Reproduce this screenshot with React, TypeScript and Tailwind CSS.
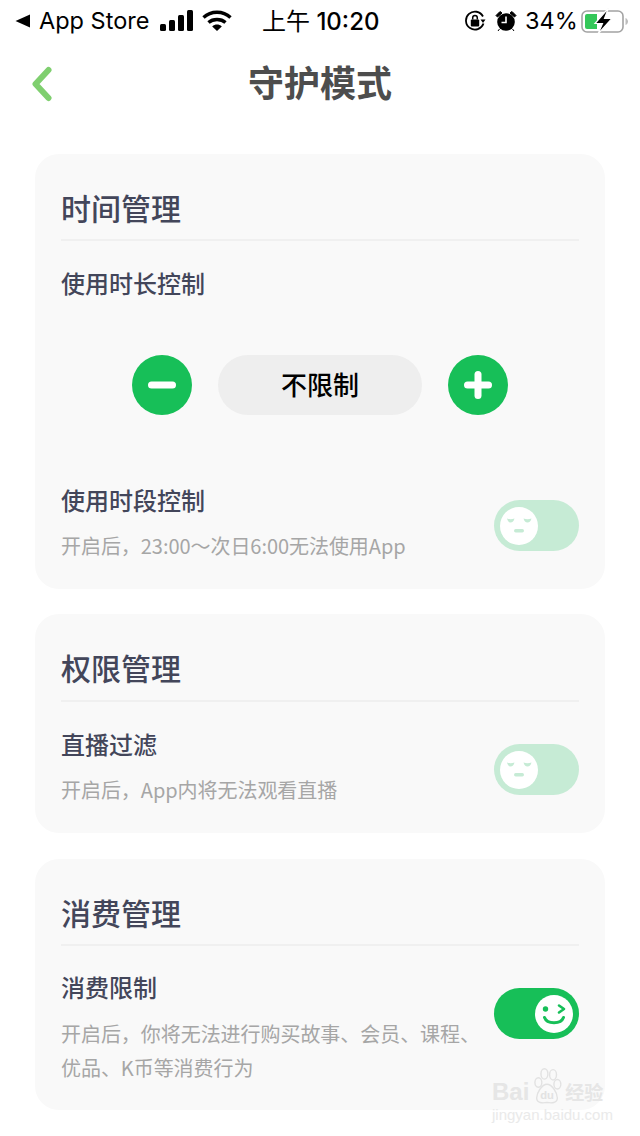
import type { ReactNode } from 'react';

const CJK = "font-['Noto_Sans_CJK_SC','Noto_Sans',sans-serif]";

function StatusBar() {
  return (
    <div className="flex h-[42px] items-center pl-[15px] text-black font-['Inter','Liberation_Sans',sans-serif]">
      <svg width="16" height="14" viewBox="0 0 16 14" className="mr-[8px] shrink-0">
        <path d="M15 0.5V13.5L0.5 7Z" fill="#000" />
      </svg>
      <span className="w-[120px] shrink-0 text-[23.5px] leading-none whitespace-nowrap">App Store</span>
      <svg width="33" height="22" viewBox="0 0 33 22" className="ml-[1px] shrink-0">
        <rect x="0" y="14" width="6" height="7" rx="1.5" />
        <rect x="9" y="10" width="6" height="11" rx="1.5" />
        <rect x="18" y="5" width="6" height="16" rx="1.5" />
        <rect x="27" y="0" width="6" height="21" rx="1.5" />
      </svg>
      <svg width="30" height="22" viewBox="0 0 30 22" className="ml-[9px] shrink-0" fill="none" stroke="#000" strokeWidth="3.4">
        <path d="M1.5 7.5C9 0.5 21 0.5 28.5 7.5" />
        <path d="M6.5 12.5C11 8.5 19 8.5 23.5 12.5" />
        <path d="M15 21L10.2 16.4C13 14 17 14 19.8 16.4Z" fill="#000" stroke="none" />
      </svg>
      <span className={`ml-[30px] w-[116px] shrink-0 text-[24px] leading-none whitespace-nowrap ${CJK}`}>
        上午<span className="font-['Inter','Liberation_Sans',sans-serif] font-medium"> 10:20</span>
      </span>
      <svg width="22" height="22" viewBox="0 0 22 22" className="ml-[86px] shrink-0" fill="none">
        <path d="M19.5 13.5A9 9 0 1 1 19 6.5" stroke="#000" strokeWidth="1.8" />
        <path d="M21.5 9.5H16.5L19 13Z" fill="#000" />
        <rect x="6.8" y="9.5" width="8.4" height="7" rx="1" fill="#000" />
        <path d="M8.7 9.5V7.8a2.3 2.3 0 0 1 4.6 0V9.5" stroke="#000" strokeWidth="1.5" />
      </svg>
      <svg width="22" height="22" viewBox="0 0 22 22" className="ml-[9px] shrink-0">
        <circle cx="11" cy="12" r="8.8" fill="#000" />
        <path d="M1 5.5L5 1.5L7 3L2.5 7Z M21 5.5L17 1.5L15 3L19.5 7Z M4.5 19L3 21M17.5 19L19 21" fill="#000" stroke="#000" strokeWidth="1" />
        <path d="M11 6.5V12.5H6.5" fill="none" stroke="#fff" strokeWidth="1.6" />
      </svg>
      <span className="ml-[8px] w-[51px] shrink-0 text-[23.5px] leading-none whitespace-nowrap">34%</span>
      <svg width="48" height="26" viewBox="0 0 48 26" className="ml-[5px] shrink-0">
        <rect x="1" y="3" width="41" height="21" rx="5" fill="none" stroke="#a3a3a3" strokeWidth="1.6" />
        <path d="M44.5 10V17C46 16.5 47 15 47 13.5C47 12 46 10.5 44.5 10Z" fill="#bdbdbd" />
        <path d="M4 8a2 2 0 0 1 2-2H16V21H6a2 2 0 0 1-2-2Z" fill="#34c759" />
        <path d="M27.5 0L14 15.5H21.5L17 26L31 10.5H23.5Z" fill="#000" stroke="#fff" strokeWidth="1.2" />
      </svg>
    </div>
  );
}

function Face({ on }: { on: boolean }) {
  const c = on ? '#17bf58' : '#c6ebd5';
  if (on) {
    return (
      <svg width="38" height="38" viewBox="0 0 38 38" className="shrink-0">
        <circle cx="19" cy="19" r="19" fill="#fff" />
        <circle cx="10.5" cy="14" r="2.7" fill={c} />
        <path d="M24 10.5L29 14L24 17.5" fill="none" stroke={c} strokeWidth="2.6" strokeLinecap="round" strokeLinejoin="round" />
        <path d="M9.5 22.5C12 29.5 26 29.5 28.5 22.5" fill="none" stroke={c} strokeWidth="3" strokeLinecap="round" />
      </svg>
    );
  }
  return (
    <svg width="38" height="38" viewBox="0 0 38 38" className="shrink-0">
      <circle cx="19" cy="19" r="19" fill="#fff" />
      <path d="M7 11.5Q10.5 13 14.5 11.5Q13.5 15.5 10.5 15.5Q8 15.5 7 11.5Z" fill={c} />
      <path d="M23.5 11.5Q27.5 13 31.5 11.5Q30.5 15.5 27.5 15.5Q24.5 15.5 23.5 11.5Z" fill={c} />
      <rect x="14" y="22" width="10" height="3.4" rx="1.7" fill={c} />
    </svg>
  );
}

function Toggle({ on = false }: { on?: boolean }) {
  return (
    <div
      className={`flex h-[51px] w-[85px] shrink-0 items-center rounded-full px-[6px] ${
        on ? 'justify-end bg-[#17bf58]' : 'justify-start bg-[#c6ebd5]'
      }`}
    >
      <Face on={on} />
    </div>
  );
}

function Card({
  title,
  children,
  className = '',
  headClass = 'h-[87px]',
}: {
  title: string;
  children: ReactNode;
  className?: string;
  headClass?: string;
}) {
  return (
    <section className={`rounded-[24px] bg-[#f9f9f9] px-[26px] ${className}`}>
      <h2 className={`${headClass} border-b-2 border-[#f0f0f0] pt-[31px] text-[30px] leading-[44px] font-medium text-[#43465a]`}>
        {title}
      </h2>
      {children}
    </section>
  );
}

function SettingRow({
  label,
  desc,
  on,
  className = '',
  descClass = 'mt-[12px]',
  toggleClass = 'pt-[17px]',
}: {
  label: string;
  desc: ReactNode;
  on?: boolean;
  className?: string;
  descClass?: string;
  toggleClass?: string;
}) {
  return (
    <div className={`flex items-start justify-between ${className}`}>
      <div className="w-[420px]">
        <div className="text-[24px] leading-[34px] font-medium text-[#43465a]">{label}</div>
        <div className={`${descClass} text-[20px] leading-[34px] tracking-[-0.05px] text-[#a6a6a6]`}>{desc}</div>
      </div>
      <div className={toggleClass}>
        <Toggle on={on} />
      </div>
    </div>
  );
}

function RoundButton({ plus = false }: { plus?: boolean }) {
  return (
    <div className="flex h-[60px] w-[60px] items-center justify-center rounded-full bg-[#17bf58]">
      <svg width="28" height="28" viewBox="0 0 28 28" fill="none" stroke="#fff" strokeWidth="7" strokeLinecap="round">
        <path d="M3.5 14H24.5" />
        {plus && <path d="M14 3.5V24.5" />}
      </svg>
    </div>
  );
}

function Watermark() {
  return (
    <div className="absolute left-[492px] top-[1079px] w-[120px] opacity-90 pointer-events-none">
      <div className="relative flex items-end font-['Liberation_Sans',sans-serif] text-[24px] font-bold leading-[26px] text-[#e4e4e4]">
        <span>Bai</span>
        <svg width="36" height="38" viewBox="0 0 36 44" className="-mt-[12px] shrink-0" fill="none" stroke="#e0e0e0" strokeWidth="1.6">
          <ellipse cx="8" cy="18" rx="4" ry="5.5" />
          <ellipse cx="15" cy="8" rx="4" ry="6" />
          <ellipse cx="25" cy="9" rx="4" ry="6" />
          <ellipse cx="30" cy="20" rx="4" ry="5.5" />
          <path d="M18 20C12 20 6 30 6 36C6 42 13 42 18 41C23 42 30 42 30 36C30 30 24 20 18 20Z" />
          <text x="18" y="37" textAnchor="middle" fontSize="13" fontWeight="700" fill="#e0e0e0" stroke="none">du</text>
        </svg>
        <span className={`text-[19px] ${CJK}`}>经验</span>
      </div>
      <div className="mt-[1px] text-[15px] leading-[18px] font-['Liberation_Sans',sans-serif] text-[#e8e8e8] whitespace-nowrap">
        jingyan.baidu.com
      </div>
    </div>
  );
}

export default function App() {
  return (
    <div className={`relative h-[1136px] w-[640px] overflow-hidden bg-white ${CJK}`}>
      <StatusBar />
      <header className="relative mt-[2px] flex h-[80px] items-center justify-center">
        <svg width="22" height="36" viewBox="0 0 22 36" className="absolute left-[31px] top-[22px]" fill="none">
          <path d="M17.5 4L4.5 18L17.5 32" stroke="#7fcf6f" strokeWidth="6" strokeLinecap="round" strokeLinejoin="round" />
        </svg>
        <h1 className="-mt-[6px] text-[36px] leading-none font-bold text-[#4d4d4d]">守护模式</h1>
      </header>
      <main className="mt-[30px] flex flex-col gap-[25px] px-[35px]">
        <Card title="时间管理" className="h-[435px]">
          <div className="mt-[25px] text-[24px] leading-[34px] font-medium text-[#43465a]">使用时长控制</div>
          <div className="mt-[55px] flex items-center justify-center gap-[26px]">
            <RoundButton />
            <div className="flex h-[60px] w-[204px] items-center justify-center rounded-full bg-[#eeeeee] pb-[4px] text-[26px] font-medium text-black">
              不限制
            </div>
            <RoundButton plus />
          </div>
          <SettingRow
            className="mt-[68px]"
            label="使用时段控制"
            desc={<>开启后，23:00～次日6:00无法使用App</>}
          />
        </Card>
        <Card title="权限管理" className="h-[219px]" headClass="h-[88px]">
          <SettingRow className="mt-[25px]" label="直播过滤" desc="开启后，App内将无法观看直播" />
        </Card>
        <Card title="消费管理" className="mt-[1px] h-[251px]">
          <SettingRow
            className="mt-[24px]"
            label="消费限制"
            on
            descClass="mt-[13px]"
            toggleClass="pt-[18px]"
            desc={<>开启后，你将无法进行购买故事、会员、课程、<br />优品、K币等消费行为</>}
          />
        </Card>
      </main>
      <Watermark />
    </div>
  );
}
